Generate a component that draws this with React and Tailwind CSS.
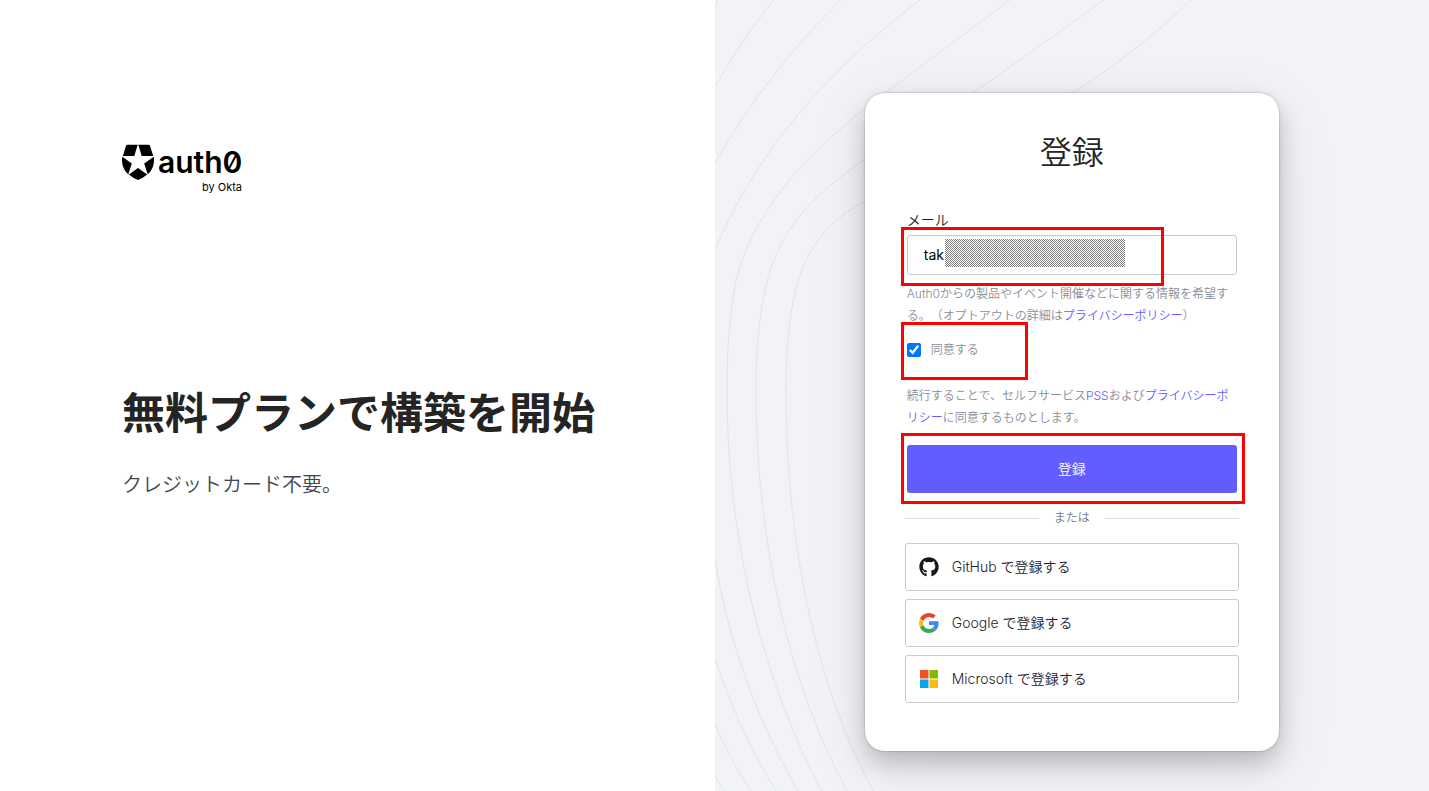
import React, { useState } from 'react'
import { FaGithub } from 'react-icons/fa'

const providers = [
    { name: "GitHub", icon: <GithubIcon /> },
    { name: "Google", icon: <GoogleIcon /> },
    { name: "Microsoft", icon: <MicrosoftIcon /> },
]

// background contour lines, drawn in the right panel
const contours = [
    "M3 0 L0 7",
    "M59 0 C35 29 17 57 0 87",
    "M126 0 C75 50 35 102 0 163",
    "M205 0 C140 50 50 130 0 250",
    "M0 558 C12 640 44 724 83 791",
    "M0 659 C16 706 36 751 61 791",
    "M0 724 C10 748 22 770 36 791",
    "M0 776 L9 791",
    "M295 0 L173 91 C110 138 53 190 27 260 C16 291 12 340 12 391 C12 545 50 685 107 791",
    "M389 0 L261 91 L149 160 C106 190 76 217 59 260 C46 293 41 340 41 391 C41 545 75 685 132 791",
    "M476 0 C440 35 400 66 360 91 L149 202 C125 214 104 233 91 260 C77 290 71 335 71 391 C71 545 101 685 158 791",
]

function GithubIcon() {
    return <FaGithub className="size-5 text-[#191717]" aria-hidden="true" />
}

function GoogleIcon() {
    return (
        <svg viewBox="0 0 48 48" className="size-5" aria-hidden="true">
            <path fill="#ea4335" d="M24 9.500c3.540 0 6.710 1.220 9.210 3.600l6.850-6.850C35.900 2.380 30.470 0 24 0 14.620 0 6.510 5.380 2.560 13.220l7.980 6.190C12.430 13.720 17.740 9.500 24 9.500z" />
            <path fill="#4285f4" d="M46.980 24.550c0-1.570-.150-3.090-.380-4.550H24v9.020h12.940c-.580 2.960-2.260 5.480-4.780 7.180l7.730 6c4.510-4.180 7.090-10.360 7.090-17.650z" />
            <path fill="#fbbc05" d="M10.530 28.590c-.480-1.450-.760-2.990-.760-4.590s.270-3.140.760-4.590l-7.980-6.190C.920 16.460 0 20.120 0 24s.920 7.540 2.560 10.780l7.970-6.190z" />
            <path fill="#34a853" d="M24 48c6.480 0 11.930-2.130 15.890-5.810l-7.730-6c-2.150 1.450-4.920 2.300-8.160 2.300-6.260 0-11.570-4.220-13.470-9.910l-7.980 6.190C6.510 42.620 14.620 48 24 48z" />
        </svg>
    )
}

function MicrosoftIcon() {
    return (
        <svg viewBox="0 0 18 18" className="size-[18px]" aria-hidden="true">
            <path fill="#f25022" d="M0 0h8.5v8.5H0z" />
            <path fill="#80bb03" d="M9.5 0H18v8.5H9.5z" />
            <path fill="#05a6f0" d="M0 9.5h8.5V18H0z" />
            <path fill="#ffba08" d="M9.5 9.5H18V18H9.5z" />
        </svg>
    )
}

function Logo() {
    return (
        <div className="w-[120px] text-black" role="img" aria-label="auth0 by Okta">
            <div className="flex items-center gap-1">
                <svg viewBox="0 0 32 36" className="w-8 h-9 shrink-0" aria-hidden="true">
                    <path d="M5.500 .8H15.700L12.300 12H.8L4 1.800Q4.400 .8 5.500 .8z" />
                    <path d="M26.500 .8H16.300L19.700 12H31.200L28 1.800Q27.600 .8 26.500 .8z" />
                    <path d="M.3 12.700L9.800 19.600L6.300 30.300C1.500 26.500-.800 19.500 .3 12.700z" />
                    <path d="M31.700 12.700L22.200 19.600L25.700 30.300C30.500 26.500 32.800 19.500 31.700 12.700z" />
                    <path d="M6.800 30.600L16 24L25.200 30.600Q21 34.300 16 36Q11 34.300 6.800 30.600z" />
                </svg>
                <span className="font-['Inter'] font-semibold text-[30px] leading-9 slashed-zero">auth0</span>
            </div>
            <p className="mt-px font-['Inter'] text-[11px] leading-3 text-right">by Okta</p>
        </div>
    )
}

function App() {
    const [email, setemail] = useState("tak")
    const [agree, setagree] = useState(true)

    return (
        <div className="flex min-h-screen w-full bg-white font-['Inter','Noto_Sans_CJK_JP',sans-serif] [text-spacing-trim:space-all]">
            <section className="w-1/2 pl-[122px] pt-36">
                <Logo />
                <h1 className="mt-[188px] text-[43px] leading-[64px] font-bold text-[#242424]">無料プランで構築を開始</h1>
                <p className="mt-6 text-xl leading-8 font-[350] text-[#41454c]">クレジットカード不要。</p>
            </section>

            <main className="relative w-1/2 overflow-hidden bg-[#f1f3f7] flex justify-center items-start pt-[93px] pb-10">
                <svg className="absolute left-0 top-0 w-[715px] h-[791px]" viewBox="0 0 715 791" fill="none" stroke="#e2e3e8" aria-hidden="true">
                    {contours.map((d, index) => <path key={index} d={d} />)}
                </svg>

                <form className="relative w-[414px] rounded-[20px] bg-white px-10 pt-9 pb-12 shadow-[0_0_0_1px_rgba(0,0,0,0.08),0_0_4px_rgba(0,0,0,0.08),0_12px_24px_rgba(0,0,0,0.2),0_16px_64px_rgba(0,0,0,0.08)]" onSubmit={(e) => { e.preventDefault() }}>
                    <h2 className="text-center text-[32px] leading-12 font-[350] text-[#242424]">登録</h2>

                    <div className="px-0.5">
                        <label htmlFor="email" className="mt-8 block text-sm leading-[22px] font-[350] text-[#1e212a]">メール</label>
                        <div className="relative mt-1">
                            <input id="email" type="text" className="block h-10 w-full rounded-[3px] border border-[#c9cace] px-4 pb-0.5 text-sm text-black outline-none" value={email} onChange={(e) => { setemail(e.target.value) }} />
                            <svg className="absolute left-[38px] top-1 w-[180px] h-7" aria-hidden="true">
                                <defs>
                                    <pattern id="dots" width="2" height="2" patternUnits="userSpaceOnUse">
                                        <path fill="#7f7f7f" d="M0 0h1v1H0zM1 1h1v1H1z" />
                                    </pattern>
                                </defs>
                                <rect width="180" height="28" fill="url(#dots)" />
                            </svg>
                            <div className="absolute -left-1.5 -top-2 w-[263px] h-[59px] border-3 border-[#ff0000] pointer-events-none"></div>
                        </div>

                        <p className="mt-2 text-xs leading-[22px] font-[350] text-[#888d99]">
                            Auth0からの製品やイベント開催などに関する情報を希望する。（オプトアウトの詳細は<a href="#privacy" className="text-[#635dff]">プライバシーポリシー</a>）
                        </p>

                        <div className="relative mt-[11px] flex h-6 items-center gap-2.5">
                            <input id="agree" type="checkbox" className="size-3.5 accent-[#0075ff]" checked={agree} onChange={(e) => { setagree(e.target.checked) }} />
                            <label htmlFor="agree" className="text-xs font-[350] text-[#888d99]">同意する</label>
                            <div className="absolute -left-1.5 -top-4 w-[127px] h-[58px] border-3 border-[#ff0000] pointer-events-none"></div>
                        </div>

                        <p className="mt-[23px] text-xs leading-[22px] font-[350] text-[#888d99]">
                            続行することで、セルフサービス<a href="#pss" className="text-[#635dff]">PSS</a>および<a href="#privacy" className="text-[#635dff]">プライバシーポリシー</a>に同意するものとします。
                        </p>

                        <div className="relative mt-4">
                            <button type="submit" className="h-12 w-full rounded-[3px] bg-[#635dff] text-sm font-[350] text-white">登録</button>
                            <div className="absolute -left-1.5 -top-3 w-[344px] h-[71px] border-3 border-[#ff0000] pointer-events-none"></div>
                        </div>
                    </div>

                    <div className="mt-[15px] flex items-center gap-[15px] text-xs leading-5 font-[350] text-[#75787f]">
                        <hr className="grow border-[#dfe0e3]" />
                        <span>または</span>
                        <hr className="grow border-[#dfe0e3]" />
                    </div>

                    <div className="mt-[15px] flex flex-col gap-2">
                        {providers.map((item, index) => (
                            <button key={index} type="button" className="flex h-12 w-full items-center gap-[11px] rounded-[3px] border border-[#c9cace] px-[11px] text-sm font-[350] text-[#1e212a]">
                                <span className="flex size-6 items-center justify-center">{item.icon}</span>
                                {item.name} で登録する
                            </button>
                        ))}
                    </div>
                </form>
            </main>
        </div>
    )
}

export default App
